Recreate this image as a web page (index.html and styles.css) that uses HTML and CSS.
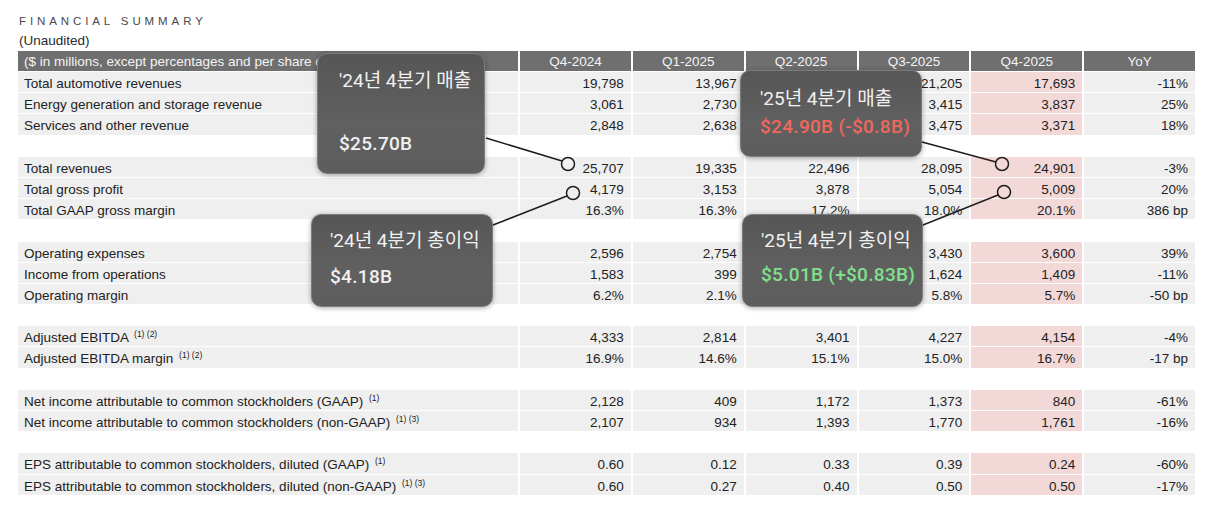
FILE: index.html
```html
<!DOCTYPE html>
<html lang="ko">
<head>
<meta charset="utf-8">
<title>Financial Summary</title>
<link rel="stylesheet" href="styles.css">
</head>
<body>
<div class="page">
  <div class="title">FINANCIAL SUMMARY</div>
  <div class="sub">(Unaudited)</div>
  <div class="table">
    <div class="row head">
      <div class="c label">($ in millions, except percentages and per share data)</div>
      <div class="c">Q4-2024</div><div class="c">Q1-2025</div><div class="c">Q2-2025</div><div class="c">Q3-2025</div><div class="c">Q4-2025</div><div class="c">YoY</div>
    </div>
    <div class="row"><div class="c label">Total automotive revenues</div><div class="c">19,798</div><div class="c">13,967</div><div class="c"></div><div class="c">21,205</div><div class="c hl">17,693</div><div class="c">-11%</div></div>
    <div class="row"><div class="c label">Energy generation and storage revenue</div><div class="c">3,061</div><div class="c">2,730</div><div class="c"></div><div class="c">3,415</div><div class="c hl">3,837</div><div class="c">25%</div></div>
    <div class="row"><div class="c label">Services and other revenue</div><div class="c">2,848</div><div class="c">2,638</div><div class="c"></div><div class="c">3,475</div><div class="c hl">3,371</div><div class="c">18%</div></div>
    <div class="spacer"></div>
    <div class="row"><div class="c label">Total revenues</div><div class="c">25,707</div><div class="c">19,335</div><div class="c">22,496</div><div class="c">28,095</div><div class="c hl">24,901</div><div class="c">-3%</div></div>
    <div class="row"><div class="c label">Total gross profit</div><div class="c">4,179</div><div class="c">3,153</div><div class="c">3,878</div><div class="c">5,054</div><div class="c hl">5,009</div><div class="c">20%</div></div>
    <div class="row"><div class="c label">Total GAAP gross margin</div><div class="c">16.3%</div><div class="c">16.3%</div><div class="c">17.2%</div><div class="c">18.0%</div><div class="c hl">20.1%</div><div class="c">386 bp</div></div>
    <div class="spacer"></div>
    <div class="row"><div class="c label">Operating expenses</div><div class="c">2,596</div><div class="c">2,754</div><div class="c"></div><div class="c">3,430</div><div class="c hl">3,600</div><div class="c">39%</div></div>
    <div class="row"><div class="c label">Income from operations</div><div class="c">1,583</div><div class="c">399</div><div class="c"></div><div class="c">1,624</div><div class="c hl">1,409</div><div class="c">-11%</div></div>
    <div class="row"><div class="c label">Operating margin</div><div class="c">6.2%</div><div class="c">2.1%</div><div class="c"></div><div class="c">5.8%</div><div class="c hl">5.7%</div><div class="c">-50 bp</div></div>
    <div class="spacer"></div>
    <div class="row"><div class="c label">Adjusted EBITDA <sup>(1) (2)</sup></div><div class="c">4,333</div><div class="c">2,814</div><div class="c">3,401</div><div class="c">4,227</div><div class="c hl">4,154</div><div class="c">-4%</div></div>
    <div class="row"><div class="c label">Adjusted EBITDA margin <sup>(1) (2)</sup></div><div class="c">16.9%</div><div class="c">14.6%</div><div class="c">15.1%</div><div class="c">15.0%</div><div class="c hl">16.7%</div><div class="c">-17 bp</div></div>
    <div class="spacer"></div>
    <div class="row"><div class="c label">Net income attributable to common stockholders (GAAP) <sup>(1)</sup></div><div class="c">2,128</div><div class="c">409</div><div class="c">1,172</div><div class="c">1,373</div><div class="c hl">840</div><div class="c">-61%</div></div>
    <div class="row"><div class="c label">Net income attributable to common stockholders (non-GAAP) <sup>(1) (3)</sup></div><div class="c">2,107</div><div class="c">934</div><div class="c">1,393</div><div class="c">1,770</div><div class="c hl">1,761</div><div class="c">-16%</div></div>
    <div class="spacer"></div>
    <div class="row"><div class="c label">EPS attributable to common stockholders, diluted (GAAP) <sup>(1)</sup></div><div class="c">0.60</div><div class="c">0.12</div><div class="c">0.33</div><div class="c">0.39</div><div class="c hl">0.24</div><div class="c">-60%</div></div>
    <div class="row"><div class="c label">EPS attributable to common stockholders, diluted (non-GAAP) <sup>(1) (3)</sup></div><div class="c">0.60</div><div class="c">0.27</div><div class="c">0.40</div><div class="c">0.50</div><div class="c hl">0.50</div><div class="c">-17%</div></div>
  </div>

  <svg class="connectors" width="1221" height="515" viewBox="0 0 1221 515">
    <g stroke="#1e1e1e" stroke-width="1.5" fill="none">
      <line x1="486" y1="138" x2="562" y2="161"/>
      <line x1="922" y1="142" x2="996" y2="162"/>
      <line x1="493" y1="225" x2="567" y2="196"/>
      <line x1="923" y1="225" x2="998" y2="195"/>
      <circle cx="568" cy="164" r="6.5"/>
      <circle cx="1002" cy="164" r="6.5"/>
      <circle cx="573" cy="193" r="6.5"/>
      <circle cx="1004" cy="192" r="6.5"/>
    </g>
  </svg>

  <div class="callout c1">
    <div class="cl-title">'24년 4분기 매출</div>
    <div class="cl-value">$25.70B</div>
  </div>
  <div class="callout c2">
    <div class="cl-title">'25년 4분기 매출</div>
    <div class="cl-value down">$24.90B (-$0.8B)</div>
  </div>
  <div class="callout c3">
    <div class="cl-title">'24년 4분기 총이익</div>
    <div class="cl-value">$4.18B</div>
  </div>
  <div class="callout c4">
    <div class="cl-title">'25년 4분기 총이익</div>
    <div class="cl-value up">$5.01B (+$0.83B)</div>
  </div>
</div>
</body>
</html>
```

FILE: styles.css
```css
html, body {
  margin: 0;
  padding: 0;
  background: #ffffff;
}

.page {
  position: relative;
  width: 1221px;
  height: 515px;
  overflow: hidden;
  padding: 14px 0 0 18px;
  box-sizing: border-box;
  font-family: "Liberation Sans", Arial, sans-serif;
  color: #222222;
}

.title {
  font-size: 11.5px;
  line-height: 14px;
  letter-spacing: 3.9px;
  color: #4a4a4a;
  padding-left: 1px;
}

.sub {
  margin-top: 4px;
  font-size: 13.5px;
  line-height: 17px;
  color: #2a2a2a;
  padding-left: 1px;
}

.table {
  margin-top: 2px;
  width: 1177px;
  display: flex;
  flex-direction: column;
  gap: 1px;
}

.row {
  display: grid;
  grid-template-columns: 500px repeat(6, 1fr);
  column-gap: 2px;
  height: 20.2px;
}

.row.head {
  height: 20px;
}

.c {
  background: #efefef;
  font-size: 13.5px;
  line-height: 20.2px;
  text-align: right;
  padding: 2px 7px 0 0;
  box-sizing: border-box;
  height: 20.2px;
  white-space: nowrap;
  overflow: hidden;
}

.c.label {
  text-align: left;
  padding: 2px 0 0 6px;
}

.c.hl {
  background: #f3d8d8;
}

.row.head .c {
  background: #6f6f6f;
  color: #f4f4f4;
  text-align: center;
  padding: 1px 0 0 0;
  height: 20px;
  line-height: 19px;
}

.row.head .c.label {
  text-align: left;
  padding-left: 6px;
}

sup {
  font-size: 8.5px;
  vertical-align: 0;
  position: relative;
  top: -5px;
  margin-left: 2px;
}

.spacer {
  height: 20.2px;
}

.connectors {
  position: absolute;
  left: 0;
  top: 0;
}

.callout {
  position: absolute;
  box-sizing: border-box;
  display: flex;
  flex-direction: column;
  background: linear-gradient(180deg, #565656 0%, #606060 60%, #5d5d5d 100%);
  border: 1px solid #7d7d7d;
  border-radius: 10px;
  box-shadow: 0 1px 5px rgba(0, 0, 0, 0.35);
  color: #f1f1f1;
  font-family: Roboto, "Noto Sans CJK KR", sans-serif;
}

.cl-title {
  font-size: 19px;
  line-height: 22px;
  white-space: nowrap;
}

.cl-value {
  font-size: 19px;
  line-height: 22px;
  font-weight: 500;
  white-space: nowrap;
  letter-spacing: 0.3px;
}

.cl-value.down {
  color: #f0685b;
}

.cl-value.up {
  color: #80e08c;
}

.c1 {
  left: 317px;
  top: 53px;
  width: 168px;
  height: 121px;
  padding: 16px 0 18px 21px;
  justify-content: space-between;
}

.c2 {
  left: 740px;
  top: 70px;
  width: 182px;
  height: 87px;
  padding: 17px 0 0 19px;
}

.c2 .cl-value {
  margin-top: 6px;
}

.c3 {
  left: 311px;
  top: 214px;
  width: 182px;
  height: 93px;
  padding: 15px 0 0 18px;
}

.c3 .cl-value {
  margin-top: 14px;
}

.c4 {
  left: 742px;
  top: 214px;
  width: 181px;
  height: 93px;
  padding: 15px 0 0 18px;
}

.c4 .cl-value {
  margin-top: 12px;
}
```
